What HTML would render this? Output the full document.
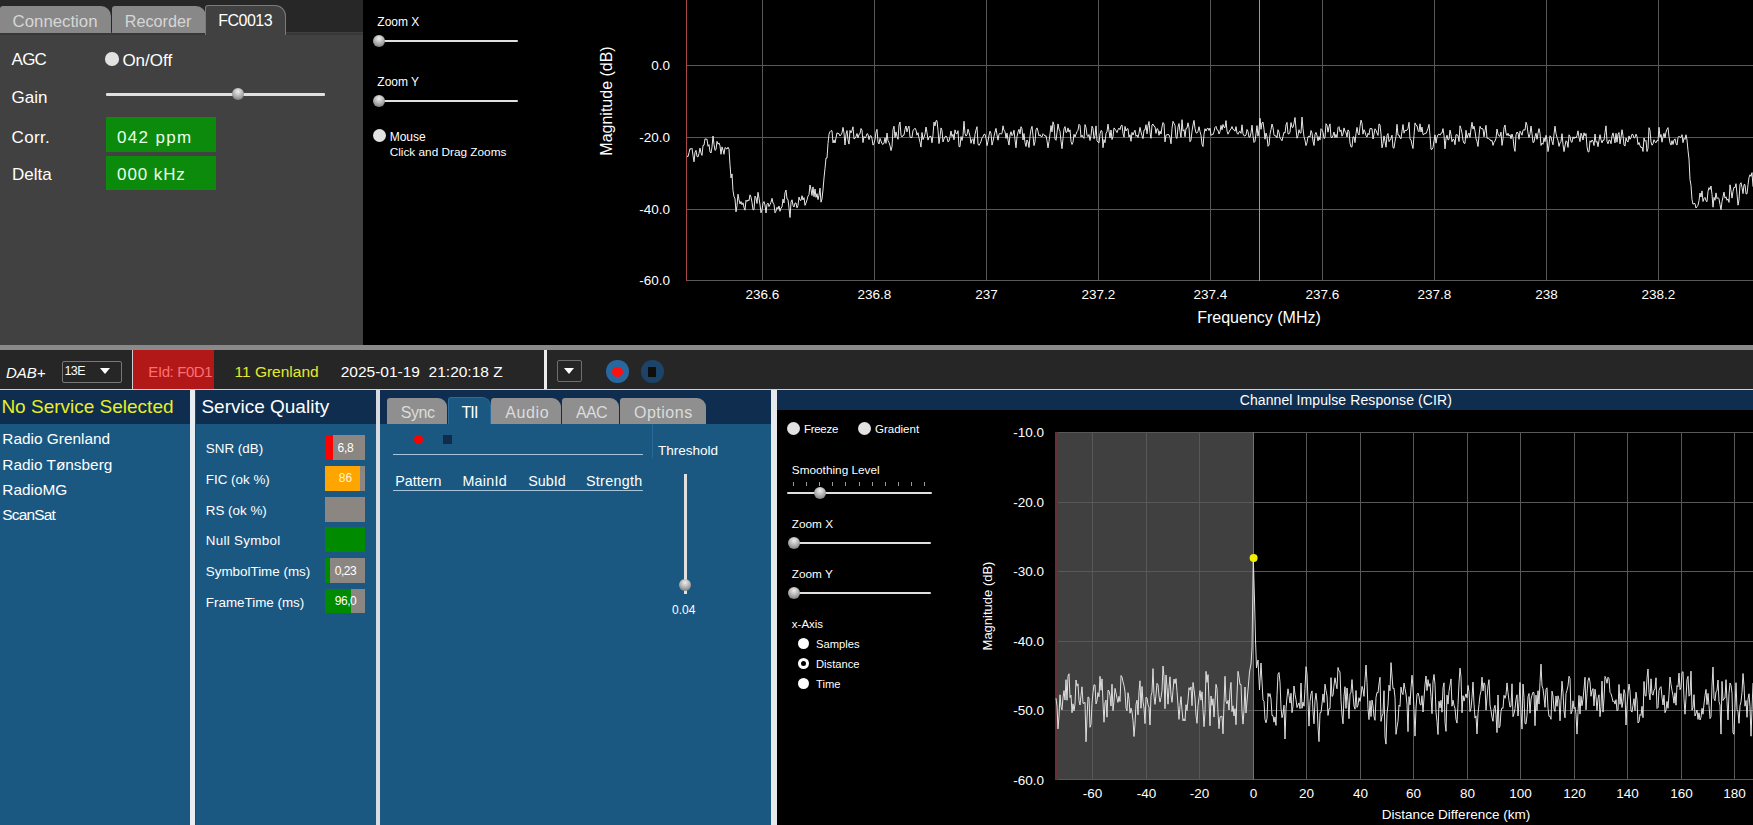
<!DOCTYPE html>
<html><head><meta charset="utf-8">
<style>
*{margin:0;padding:0;box-sizing:border-box}
html,body{width:1753px;height:825px;overflow:hidden;background:#000}
body{position:relative;font-family:"Liberation Sans",sans-serif;color:#fff}
.a{position:absolute;white-space:nowrap}
.t{position:absolute;white-space:nowrap;line-height:1}
.thumb{position:absolute;border-radius:50%;background:radial-gradient(circle at 50% 30%,#eeeeee 0%,#b4b4b4 45%,#666 100%)}
.track{position:absolute;background:#e0e0e0;height:2px;border-radius:1px;margin-top:0.5px}
.radio{position:absolute;border-radius:50%;background:#e2e2e2}
</style></head><body>

<!-- ===== top-left panel ===== -->
<div class="a" style="left:0;top:0;width:363px;height:345px;background:#414141"></div>
<div class="a" style="left:0;top:0;width:363px;height:32px;background:#272727"></div>
<div class="a" style="left:0;top:33px;width:363px;height:2px;background:#373737"></div>
<div class="a" style="left:0;top:5.5px;width:110.5px;height:27.5px;background:#888;border-radius:3px 10px 0 0"></div>
<div class="a" style="left:111.5px;top:5.5px;width:94px;height:27.5px;background:#888;border-radius:3px 10px 0 0"></div>
<div class="a" style="left:205px;top:5px;width:81px;height:30px;background:#414141;border:1px solid #7a7a7a;border-bottom:none;border-radius:3px 11px 0 0"></div>
<div class="t" style="left:12.6px;top:13.5px;font-size:16.8px;color:#d6d6d6">Connection</div>
<div class="t" style="left:124.8px;top:12.5px;font-size:16.2px;color:#d6d6d6">Recorder</div>
<div class="t" style="left:218.2px;top:13.2px;font-size:16px;color:#fff;letter-spacing:-0.5px">FC0013</div>

<div class="t" style="left:11.6px;top:50.8px;font-size:17px;color:#fff;letter-spacing:-0.8px">AGC</div>
<div class="t" style="left:11.6px;top:89.2px;font-size:17px;color:#fff">Gain</div>
<div class="t" style="left:11.6px;top:128.9px;font-size:17px;color:#fff;letter-spacing:0.3px">Corr.</div>
<div class="t" style="left:12.1px;top:166.2px;font-size:17px;color:#fff">Delta</div>
<div class="radio" style="left:105.2px;top:52px;width:13.6px;height:13.6px"></div>
<div class="t" style="left:122.4px;top:52.1px;font-size:17px;color:#fff">On/Off</div>
<div class="track" style="left:106px;top:93px;width:219px;height:3px;margin:0"></div>
<div class="thumb" style="left:232px;top:88px;width:12px;height:12px"></div>
<div class="a" style="left:106px;top:117px;width:110px;height:35px;background:#0b8a0b"></div>
<div class="a" style="left:106px;top:156px;width:110px;height:34px;background:#0b8a0b"></div>
<div class="t" style="left:117.1px;top:128.6px;font-size:17px;color:#eaffea;letter-spacing:1.3px">042 ppm</div>
<div class="t" style="left:117.1px;top:166.2px;font-size:17px;color:#eaffea;letter-spacing:0.9px">000 kHz</div>

<!-- ===== zoom controls ===== -->
<div class="t" style="left:377.3px;top:16.0px;font-size:12px">Zoom X</div>
<div class="track" style="left:378px;top:40px;width:139.6px;margin:0"></div>
<div class="thumb" style="left:373px;top:35px;width:12px;height:12px"></div>
<div class="t" style="left:377.3px;top:76.0px;font-size:12px">Zoom Y</div>
<div class="track" style="left:378px;top:100px;width:139.6px;margin:0"></div>
<div class="thumb" style="left:373px;top:95px;width:12px;height:12px"></div>
<div class="radio" style="left:372.5px;top:129.2px;width:13px;height:13px"></div>
<div class="t" style="left:389.7px;top:130.5px;font-size:12px">Mouse</div>
<div class="t" style="left:389.7px;top:146.9px;font-size:11.8px">Click and Drag Zooms</div>

<!-- ===== spectrum plot ===== -->
<svg class="a" style="left:0;top:0" width="1753" height="345" viewBox="0 0 1753 345">
 <g stroke="#585858" stroke-width="1" shape-rendering="crispEdges">
  <line x1="687" y1="65.5" x2="1753" y2="65.5"/>
  <line x1="687" y1="137.5" x2="1753" y2="137.5"/>
  <line x1="687" y1="209.5" x2="1753" y2="209.5"/>
  <line x1="687" y1="280.5" x2="1753" y2="280.5"/>
  <line x1="762.5" y1="0" x2="762.5" y2="281"/>
  <line x1="874.5" y1="0" x2="874.5" y2="281"/>
  <line x1="986.5" y1="0" x2="986.5" y2="281"/>
  <line x1="1098.5" y1="0" x2="1098.5" y2="281"/>
  <line x1="1210.5" y1="0" x2="1210.5" y2="281"/>
  <line x1="1322.5" y1="0" x2="1322.5" y2="281"/>
  <line x1="1434.5" y1="0" x2="1434.5" y2="281"/>
  <line x1="1546.5" y1="0" x2="1546.5" y2="281"/>
  <line x1="1658.5" y1="0" x2="1658.5" y2="281"/>
 </g>
 <line x1="1259.5" y1="0" x2="1259.5" y2="281" stroke="#9aa83c" stroke-width="1" shape-rendering="crispEdges"/>
 <line x1="686.5" y1="0" x2="686.5" y2="281" stroke="#a84848" stroke-width="1" shape-rendering="crispEdges"/>
 <polyline fill="none" stroke="#e8e8e8" stroke-width="1" points="687,156.0 688,156.7 689,152.7 690,148.6 691,149.3 692,148.2 693,155.5 694,161.8 695,152.4 696,150.4 697,156.5 698,156.9 699,153.5 700,148.1 701,152.9 702,155.4 703,145.4 704,145.3 705,138.8 706,139.3 707,139.2 708,146.3 709,144.6 710,152.0 711,153.0 712,147.1 713,136.0 714,144.4 715,150.4 716,149.5 717,141.3 718,144.2 719,142.9 720,145.8 721,154.3 722,146.9 723,150.0 724,154.3 725,147.5 726,148.3 727,149.1 728,147.2 729,149.2 730,164.8 731,177.9 732,173.9 733,190.7 734,196.5 735,198.8 736,211.9 737,205.7 738,194.2 739,199.9 740,203.9 741,201.5 742,204.7 743,202.8 744,207.5 745,210.2 746,200.2 747,201.5 748,199.9 749,200.7 750,194.8 751,197.2 752,202.3 753,209.9 754,209.5 755,196.1 756,197.8 757,203.5 758,192.3 759,198.2 760,204.8 761,212.8 762,210.0 763,203.1 764,201.6 765,205.0 766,213.0 767,204.3 768,203.1 769,206.6 770,204.7 771,202.2 772,198.3 773,203.0 774,204.5 775,212.8 776,211.1 777,207.3 778,209.0 779,206.0 780,211.3 781,207.9 782,207.0 783,199.1 784,203.0 785,192.7 786,190.1 787,199.0 788,199.5 789,208.1 790,217.5 791,202.2 792,199.8 793,205.3 794,207.0 795,203.1 796,203.0 797,207.8 798,205.4 799,197.0 800,200.2 801,200.4 802,195.7 803,200.0 804,197.6 805,205.4 806,203.0 807,199.9 808,196.0 809,194.7 810,185.0 811,189.3 812,195.5 813,186.9 814,196.7 815,189.0 816,197.4 817,193.6 818,199.6 819,195.3 820,188.1 821,202.2 822,198.9 823,189.9 824,177.9 825,168.3 826,158.1 827,158.1 828,143.5 829,134.2 830,131.7 831,130.6 832,130.8 833,142.9 834,139.9 835,143.0 836,137.9 837,132.8 838,133.6 839,133.6 840,136.0 841,134.7 842,132.9 843,127.4 844,132.9 845,145.0 846,134.2 847,130.5 848,139.9 849,144.1 850,130.4 851,132.9 852,130.5 853,126.8 854,139.0 855,138.3 856,136.5 857,133.5 858,138.0 859,134.4 860,133.8 861,128.5 862,130.2 863,142.6 864,136.5 865,138.0 866,136.7 867,133.6 868,134.3 869,139.6 870,136.0 871,135.7 872,138.7 873,145.1 874,143.4 875,139.5 876,132.1 877,129.3 878,142.0 879,144.0 880,138.4 881,141.1 882,143.7 883,144.5 884,143.0 885,137.8 886,143.4 887,133.0 888,140.9 889,142.4 890,145.6 891,150.6 892,146.8 893,129.6 894,126.2 895,137.6 896,131.9 897,136.4 898,139.3 899,125.0 900,122.0 901,135.2 902,137.0 903,135.3 904,135.2 905,129.3 906,126.0 907,131.9 908,128.1 909,126.1 910,137.1 911,137.6 912,137.5 913,130.3 914,129.6 915,128.2 916,130.0 917,135.2 918,132.7 919,138.0 920,142.1 921,147.1 922,132.5 923,139.6 924,137.2 925,134.1 926,127.0 927,132.6 928,140.1 929,137.1 930,136.3 931,136.5 932,142.8 933,134.7 934,122.1 935,125.9 936,120.7 937,120.7 938,130.2 939,143.6 940,136.8 941,127.9 942,130.5 943,141.9 944,138.9 945,136.7 946,136.0 947,137.6 948,141.9 949,141.0 950,136.7 951,131.0 952,136.6 953,134.4 954,139.8 955,129.9 956,133.4 957,133.9 958,130.7 959,146.6 960,146.7 961,136.6 962,140.5 963,135.5 964,121.3 965,133.5 966,136.1 967,134.8 968,129.2 969,132.5 970,136.3 971,143.3 972,139.7 973,138.7 974,144.2 975,134.3 976,130.0 977,126.7 978,144.0 979,145.4 980,143.8 981,141.4 982,137.8 983,136.9 984,134.3 985,134.3 986,138.1 987,145.7 988,141.3 989,135.3 990,131.2 991,133.4 992,145.1 993,141.2 994,136.3 995,132.0 996,128.4 997,134.9 998,140.2 999,134.2 1000,133.3 1001,134.1 1002,133.5 1003,125.8 1004,130.5 1005,131.4 1006,138.4 1007,133.1 1008,140.1 1009,145.1 1010,135.0 1011,131.7 1012,135.7 1013,134.3 1014,130.2 1015,139.7 1016,147.8 1017,136.6 1018,132.2 1019,129.3 1020,133.9 1021,126.7 1022,128.8 1023,140.0 1024,133.5 1025,142.7 1026,146.5 1027,140.0 1028,141.9 1029,147.5 1030,136.1 1031,129.4 1032,126.3 1033,135.7 1034,145.6 1035,141.8 1036,129.7 1037,127.9 1038,131.3 1039,135.9 1040,134.7 1041,136.6 1042,136.8 1043,133.7 1044,134.7 1045,136.2 1046,135.7 1047,140.8 1048,147.9 1049,141.5 1050,133.7 1051,125.6 1052,131.9 1053,121.8 1054,124.9 1055,139.1 1056,140.3 1057,132.6 1058,123.9 1059,129.1 1060,131.3 1061,141.1 1062,148.7 1063,138.4 1064,128.8 1065,126.6 1066,132.5 1067,132.0 1068,127.9 1069,132.1 1070,129.8 1071,141.4 1072,144.5 1073,142.2 1074,134.3 1075,137.0 1076,134.2 1077,131.7 1078,130.2 1079,124.3 1080,125.3 1081,137.0 1082,135.1 1083,137.2 1084,138.4 1085,124.6 1086,127.6 1087,135.1 1088,136.7 1089,134.5 1090,140.5 1091,135.6 1092,126.2 1093,128.4 1094,138.7 1095,135.7 1096,125.9 1097,140.7 1098,142.1 1099,142.9 1100,133.8 1101,130.5 1102,131.1 1103,147.7 1104,139.6 1105,142.7 1106,133.2 1107,131.9 1108,124.1 1109,131.1 1110,137.9 1111,130.0 1112,139.5 1113,136.5 1114,127.9 1115,129.1 1116,130.8 1117,132.6 1118,129.8 1119,128.1 1120,129.7 1121,125.8 1122,125.0 1123,133.4 1124,137.2 1125,126.4 1126,131.0 1127,128.9 1128,128.7 1129,137.1 1130,134.7 1131,141.3 1132,132.4 1133,135.0 1134,132.3 1135,130.2 1136,136.3 1137,135.0 1138,137.5 1139,133.2 1140,127.4 1141,132.0 1142,135.7 1143,138.6 1144,130.1 1145,129.9 1146,124.7 1147,133.8 1148,125.9 1149,121.5 1150,132.7 1151,138.3 1152,124.9 1153,124.1 1154,126.2 1155,126.7 1156,133.4 1157,128.6 1158,129.3 1159,135.3 1160,131.0 1161,134.0 1162,127.0 1163,122.5 1164,123.9 1165,141.9 1166,135.2 1167,134.9 1168,134.3 1169,134.9 1170,137.3 1171,143.8 1172,128.2 1173,121.4 1174,123.4 1175,125.4 1176,137.5 1177,138.4 1178,127.2 1179,123.5 1180,131.7 1181,137.4 1182,119.7 1183,131.1 1184,129.7 1185,136.8 1186,128.4 1187,128.2 1188,122.8 1189,127.7 1190,141.8 1191,140.1 1192,131.2 1193,125.0 1194,120.4 1195,128.4 1196,132.8 1197,133.0 1198,131.3 1199,126.7 1200,131.5 1201,135.2 1202,144.1 1203,146.5 1204,134.4 1205,128.7 1206,131.1 1207,128.7 1208,128.1 1209,130.5 1210,128.1 1211,135.5 1212,134.2 1213,134.6 1214,131.7 1215,127.4 1216,126.4 1217,129.8 1218,130.2 1219,134.0 1220,131.7 1221,125.4 1222,129.8 1223,124.5 1224,127.3 1225,127.6 1226,120.6 1227,131.1 1228,134.2 1229,132.0 1230,130.0 1231,129.0 1232,126.5 1233,129.4 1234,129.8 1235,131.2 1236,126.6 1237,133.1 1238,134.3 1239,132.0 1240,131.3 1241,133.4 1242,124.8 1243,133.9 1244,135.8 1245,135.9 1246,135.0 1247,129.5 1248,131.6 1249,137.3 1250,137.0 1251,132.8 1252,125.2 1253,135.9 1254,142.5 1255,141.3 1256,133.7 1257,125.6 1258,136.2 1259,129.8 1260,118.3 1261,129.3 1262,122.8 1263,122.1 1264,129.2 1265,139.2 1266,133.1 1267,136.7 1268,146.3 1269,145.1 1270,134.4 1271,129.5 1272,124.0 1273,127.6 1274,135.1 1275,136.2 1276,135.7 1277,137.9 1278,129.7 1279,132.5 1280,138.1 1281,139.1 1282,140.8 1283,136.4 1284,132.2 1285,133.1 1286,125.0 1287,122.4 1288,133.8 1289,133.9 1290,132.1 1291,122.6 1292,127.2 1293,127.4 1294,123.3 1295,117.5 1296,128.7 1297,138.2 1298,135.5 1299,129.7 1300,132.9 1301,133.1 1302,117.1 1303,128.7 1304,136.8 1305,140.2 1306,145.6 1307,142.5 1308,136.7 1309,136.1 1310,137.0 1311,130.5 1312,133.0 1313,141.0 1314,145.5 1315,134.5 1316,132.4 1317,135.7 1318,140.9 1319,136.6 1320,139.9 1321,128.7 1322,129.7 1323,132.3 1324,138.5 1325,137.7 1326,123.7 1327,125.3 1328,132.2 1329,126.8 1330,123.9 1331,137.2 1332,137.8 1333,135.6 1334,132.0 1335,137.7 1336,134.4 1337,137.6 1338,127.6 1339,126.6 1340,131.7 1341,129.9 1342,136.2 1343,134.1 1344,127.9 1345,131.5 1346,132.3 1347,137.0 1348,129.9 1349,131.3 1350,143.1 1351,146.9 1352,146.9 1353,136.9 1354,136.9 1355,142.6 1356,133.4 1357,127.4 1358,133.2 1359,135.0 1360,126.6 1361,120.1 1362,123.3 1363,134.2 1364,129.7 1365,131.9 1366,135.6 1367,137.1 1368,133.3 1369,134.8 1370,128.5 1371,128.7 1372,128.7 1373,139.0 1374,134.2 1375,128.8 1376,130.3 1377,133.1 1378,135.4 1379,123.9 1380,124.8 1381,134.0 1382,147.8 1383,143.4 1384,135.9 1385,141.3 1386,147.2 1387,135.3 1388,133.5 1389,141.7 1390,140.1 1391,138.3 1392,135.2 1393,147.7 1394,148.2 1395,141.4 1396,136.4 1397,124.3 1398,135.0 1399,135.0 1400,137.9 1401,138.8 1402,131.1 1403,124.5 1404,133.2 1405,130.3 1406,130.7 1407,130.1 1408,128.4 1409,122.3 1410,139.1 1411,139.9 1412,144.9 1413,148.5 1414,135.4 1415,122.9 1416,125.2 1417,125.7 1418,130.4 1419,131.8 1420,123.8 1421,132.0 1422,127.1 1423,134.6 1424,134.6 1425,133.1 1426,133.6 1427,131.1 1428,128.4 1429,124.4 1430,135.5 1431,149.3 1432,149.3 1433,147.5 1434,140.8 1435,134.8 1436,143.2 1437,137.4 1438,134.7 1439,134.0 1440,135.2 1441,133.2 1442,133.0 1443,128.6 1444,135.4 1445,148.9 1446,138.6 1447,135.2 1448,139.9 1449,139.4 1450,130.1 1451,134.5 1452,141.7 1453,139.3 1454,139.6 1455,144.7 1456,134.6 1457,134.9 1458,135.5 1459,141.5 1460,125.8 1461,128.6 1462,133.2 1463,140.5 1464,143.2 1465,143.4 1466,130.3 1467,138.2 1468,134.9 1469,133.0 1470,137.5 1471,128.8 1472,122.3 1473,129.1 1474,126.2 1475,131.2 1476,138.5 1477,141.6 1478,146.5 1479,135.8 1480,126.3 1481,128.7 1482,128.5 1483,129.0 1484,136.8 1485,130.9 1486,125.3 1487,138.2 1488,138.1 1489,139.3 1490,139.3 1491,141.2 1492,140.3 1493,145.4 1494,142.3 1495,141.0 1496,138.2 1497,129.0 1498,133.9 1499,136.0 1500,136.3 1501,132.1 1502,145.4 1503,138.8 1504,127.8 1505,125.0 1506,133.1 1507,135.5 1508,133.2 1509,136.1 1510,134.7 1511,138.8 1512,134.0 1513,137.7 1514,147.2 1515,151.4 1516,134.7 1517,132.0 1518,133.0 1519,139.3 1520,131.2 1521,132.9 1522,135.2 1523,130.3 1524,129.7 1525,130.2 1526,122.2 1527,125.2 1528,133.2 1529,137.6 1530,134.1 1531,126.0 1532,133.4 1533,142.6 1534,142.1 1535,136.7 1536,133.2 1537,139.3 1538,133.4 1539,128.6 1540,133.3 1541,145.5 1542,143.0 1543,144.3 1544,138.0 1545,141.7 1546,135.3 1547,139.6 1548,151.6 1549,145.3 1550,135.8 1551,137.0 1552,141.4 1553,144.8 1554,134.1 1555,126.2 1556,133.5 1557,137.6 1558,140.5 1559,146.4 1560,142.9 1561,141.5 1562,133.7 1563,144.5 1564,151.6 1565,146.0 1566,140.8 1567,141.8 1568,147.4 1569,134.8 1570,136.5 1571,141.6 1572,142.4 1573,136.8 1574,138.7 1575,136.9 1576,138.0 1577,135.6 1578,130.8 1579,137.4 1580,141.7 1581,133.1 1582,136.0 1583,140.0 1584,132.8 1585,135.9 1586,133.6 1587,146.7 1588,151.8 1589,151.8 1590,140.8 1591,142.3 1592,140.0 1593,141.1 1594,145.5 1595,134.0 1596,142.3 1597,141.4 1598,146.7 1599,140.3 1600,134.7 1601,139.8 1602,142.9 1603,140.1 1604,140.3 1605,132.5 1606,125.8 1607,141.3 1608,143.8 1609,140.1 1610,140.3 1611,143.7 1612,135.9 1613,132.9 1614,137.7 1615,142.9 1616,133.4 1617,142.2 1618,134.4 1619,132.5 1620,143.9 1621,137.5 1622,129.7 1623,135.5 1624,145.0 1625,146.1 1626,138.0 1627,141.0 1628,142.1 1629,135.9 1630,139.3 1631,137.7 1632,134.2 1633,134.6 1634,137.9 1635,137.7 1636,134.2 1637,136.5 1638,144.6 1639,142.5 1640,145.7 1641,147.7 1642,147.0 1643,151.5 1644,137.9 1645,141.4 1646,140.4 1647,151.5 1648,148.3 1649,127.7 1650,130.6 1651,142.0 1652,145.2 1653,143.8 1654,139.7 1655,141.9 1656,142.8 1657,140.4 1658,141.0 1659,127.3 1660,137.2 1661,134.5 1662,142.2 1663,137.1 1664,133.3 1665,137.9 1666,132.1 1667,129.2 1668,127.6 1669,136.6 1670,142.9 1671,145.1 1672,140.7 1673,144.5 1674,140.0 1675,138.8 1676,143.3 1677,145.1 1678,137.6 1679,136.2 1680,137.3 1681,137.4 1682,134.7 1683,142.7 1684,138.3 1685,139.4 1686,134.8 1687,140.0 1688,150.5 1689,159.0 1690,179.7 1691,185.3 1692,199.7 1693,204.2 1694,203.4 1695,203.6 1696,208.0 1697,206.7 1698,205.2 1699,200.6 1700,193.0 1701,197.0 1702,190.9 1703,201.5 1704,198.6 1705,197.4 1706,200.8 1707,201.7 1708,191.4 1709,187.6 1710,189.5 1711,186.0 1712,194.5 1713,207.2 1714,197.4 1715,200.3 1716,192.9 1717,198.7 1718,197.6 1719,198.8 1720,204.5 1721,209.8 1722,201.7 1723,196.9 1724,192.1 1725,198.2 1726,196.8 1727,200.3 1728,198.9 1729,202.4 1730,184.8 1731,190.7 1732,198.1 1733,191.4 1734,187.3 1735,187.7 1736,183.7 1737,194.1 1738,205.2 1739,199.9 1740,184.4 1741,182.7 1742,187.6 1743,193.6 1744,184.6 1745,184.6 1746,193.8 1747,193.8 1748,184.8 1749,177.5 1750,174.7 1751,176.4 1752,172.6 1753,186.7"/>
 <g font-family="Liberation Sans" font-size="13.5" fill="#fff" text-anchor="end">
  <text x="670" y="70">0.0</text>
  <text x="670" y="142">-20.0</text>
  <text x="670" y="214">-40.0</text>
  <text x="670" y="285">-60.0</text>
 </g>
 <g font-family="Liberation Sans" font-size="13.5" fill="#fff" text-anchor="middle">
  <text x="762.5" y="299">236.6</text>
  <text x="874.5" y="299">236.8</text>
  <text x="986.5" y="299">237</text>
  <text x="1098.5" y="299">237.2</text>
  <text x="1210.5" y="299">237.4</text>
  <text x="1322.5" y="299">237.6</text>
  <text x="1434.5" y="299">237.8</text>
  <text x="1546.5" y="299">238</text>
  <text x="1658.5" y="299">238.2</text>
  <text x="1259" y="323" font-size="16">Frequency (MHz)</text>
  <text x="0" y="0" font-size="16" transform="translate(612,101) rotate(-90)">Magnitude (dB)</text>
 </g>
</svg>

<!-- ===== separator + toolbar ===== -->
<div class="a" style="left:0;top:345px;width:1753px;height:5px;background:#8a8a8a"></div>
<div class="a" style="left:0;top:350px;width:1753px;height:39px;background:#262626"></div>
<div class="t" style="left:6px;top:364.8px;font-size:15px;font-style:italic">DAB+</div>
<div class="a" style="left:62px;top:361px;width:60px;height:22px;border:1px solid #777;border-radius:2px"></div>
<div class="t" style="left:64.5px;top:365.4px;font-size:12.5px;letter-spacing:-0.6px">13E</div>
<div class="a" style="left:100px;top:368px;width:0;height:0;border-left:5px solid transparent;border-right:5px solid transparent;border-top:6px solid #fff"></div>
<div class="a" style="left:132px;top:350px;width:1px;height:39px;background:#cfcfcf"></div>
<div class="a" style="left:133px;top:350px;width:81px;height:39px;background:#b31818"></div>
<div class="t" style="left:148.3px;top:363.6px;font-size:15px;color:#ff7070;letter-spacing:-0.4px">EId: F0D1</div>
<div class="t" style="left:234.5px;top:363.6px;font-size:15.5px;color:#e4ea30">11 Grenland</div>
<div class="t" style="left:340.7px;top:363.6px;font-size:15.5px;color:#fff">2025-01-19&nbsp; 21:20:18 Z</div>
<div class="a" style="left:544px;top:350px;width:3px;height:39px;background:#ececec"></div>
<div class="a" style="left:557px;top:360px;width:25px;height:22px;border:1px solid #6e6e6e;border-radius:2px"></div>
<div class="a" style="left:564px;top:368px;width:0;height:0;border-left:5.5px solid transparent;border-right:5.5px solid transparent;border-top:6px solid #fff"></div>
<div class="a" style="left:606px;top:360px;width:22.5px;height:22.5px;border-radius:50%;background:#2868a0"></div>
<div class="a" style="left:612px;top:366.5px;width:10.5px;height:10.5px;border-radius:50%;background:#ff1010"></div>
<div class="a" style="left:641px;top:360px;width:22.5px;height:22.5px;border-radius:50%;background:#1c4468"></div>
<div class="a" style="left:648px;top:367px;width:8px;height:10px;background:#100e0c"></div>

<!-- ===== bottom panels ===== -->
<div class="a" style="left:0;top:389px;width:1753px;height:1px;background:#c8d2dc"></div>
<!-- panel 1 -->
<div class="a" style="left:0;top:390px;width:190px;height:435px;background:#1a5882"></div>
<div class="a" style="left:0;top:390px;width:190px;height:34px;background:#0f2d4e"></div>
<div class="t" style="left:1.4px;top:397.4px;font-size:19px;color:#e8ef24">No Service Selected</div>
<div class="t" style="left:2.3px;top:431.1px;font-size:15.4px">Radio Grenland</div>
<div class="t" style="left:2.3px;top:456.6px;font-size:15.4px">Radio Tønsberg</div>
<div class="t" style="left:2.3px;top:481.8px;font-size:15.4px">RadioMG</div>
<div class="t" style="left:2.3px;top:507.2px;font-size:15.4px;letter-spacing:-0.8px">ScanSat</div>
<div class="a" style="left:190px;top:390px;width:5px;height:435px;background:#e6edf3"></div>
<div class="a" style="left:195px;top:390px;width:1px;height:435px;background:#1f4a6e"></div>
<!-- panel 2 -->
<div class="a" style="left:196px;top:390px;width:180px;height:435px;background:#1a5882"></div>
<div class="a" style="left:196px;top:390px;width:180px;height:34px;background:#0f2d4e"></div>
<div class="t" style="left:201.4px;top:397.4px;font-size:19px">Service Quality</div>
<div class="t" style="left:205.8px;top:441.7px;font-size:13.4px">SNR (dB)</div>
<div class="t" style="left:205.8px;top:472.8px;font-size:13.4px">FIC (ok %)</div>
<div class="t" style="left:205.8px;top:503.9px;font-size:13.4px">RS (ok %)</div>
<div class="t" style="left:205.8px;top:533.9px;font-size:13.4px;letter-spacing:0.3px">Null Symbol</div>
<div class="t" style="left:205.8px;top:565.0px;font-size:13.4px">SymbolTime (ms)</div>
<div class="t" style="left:205.8px;top:595.6px;font-size:13.4px">FrameTime (ms)</div>
<div class="a" style="left:325px;top:435px;width:40px;height:25px;background:#8b8682"></div>
<div class="a" style="left:325px;top:435px;width:8px;height:25px;background:#ff0000"></div>
<div class="a" style="left:325px;top:466px;width:40px;height:25px;background:#8b8682"></div>
<div class="a" style="left:325px;top:466px;width:35px;height:25px;background:#ffa500"></div>
<div class="a" style="left:325px;top:497px;width:40px;height:25px;background:#8b8682"></div>
<div class="a" style="left:325px;top:527px;width:40px;height:25px;background:#008a00"></div>
<div class="a" style="left:325px;top:558px;width:40px;height:25px;background:#8b8682"></div>
<div class="a" style="left:325px;top:558px;width:5px;height:25px;background:#008a00"></div>
<div class="a" style="left:325px;top:589px;width:40px;height:24px;background:#8b8682"></div>
<div class="a" style="left:325px;top:589px;width:26px;height:24px;background:#008a00"></div>
<div class="t" style="left:325.5px;top:441.7px;width:40px;text-align:center;font-size:12px;letter-spacing:-0.3px">6,8</div>
<div class="t" style="left:325.5px;top:472.3px;width:40px;text-align:center;font-size:12px;color:#fff5d0">86</div>
<div class="t" style="left:325.5px;top:565.0px;width:40px;text-align:center;font-size:12px;letter-spacing:-0.5px">0,23</div>
<div class="t" style="left:325.5px;top:595.4px;width:40px;text-align:center;font-size:12px;letter-spacing:-0.5px">96,0</div>
<div class="a" style="left:376px;top:390px;width:4px;height:435px;background:#d8dce2"></div>
<!-- panel 3 (TII) -->
<div class="a" style="left:380px;top:390px;width:391px;height:435px;background:#1a5882"></div>
<div class="a" style="left:380px;top:390px;width:391px;height:34px;background:#0f2d4e"></div>
<div class="a" style="left:387px;top:398px;width:60px;height:26px;background:#8f8f8f;border-radius:3px 9px 0 0"></div>
<div class="a" style="left:448px;top:397px;width:43px;height:27px;background:#1a5882;border:1px solid #2c6c9c;border-bottom:none;border-radius:3px 9px 0 0"></div>
<div class="a" style="left:491px;top:398px;width:70px;height:26px;background:#8f8f8f;border-radius:3px 9px 0 0"></div>
<div class="a" style="left:562px;top:398px;width:57px;height:26px;background:#8f8f8f;border-radius:3px 9px 0 0"></div>
<div class="a" style="left:620px;top:398px;width:86px;height:26px;background:#8f8f8f;border-radius:3px 9px 0 0"></div>
<div class="t" style="left:400.7px;top:404.8px;font-size:16px;color:#dcdcdc;letter-spacing:-0.4px">Sync</div>
<div class="t" style="left:461.5px;top:404.8px;font-size:16px;color:#fff;letter-spacing:-0.9px">TII</div>
<div class="t" style="left:505.3px;top:404.8px;font-size:16px;color:#dcdcdc;letter-spacing:0.6px">Audio</div>
<div class="t" style="left:576px;top:404.8px;font-size:16px;color:#dcdcdc;letter-spacing:-0.7px">AAC</div>
<div class="t" style="left:634px;top:404.8px;font-size:16px;color:#dcdcdc;letter-spacing:0.5px">Options</div>
<div class="a" style="left:414px;top:435px;width:9px;height:9px;border-radius:50%;background:#ff0000"></div>
<div class="a" style="left:443px;top:435px;width:9px;height:9px;background:#0f2d4a"></div>
<div class="a" style="left:393px;top:454px;width:250px;height:1px;background:#a8c4dc"></div>
<div class="a" style="left:652px;top:424px;width:1px;height:34px;background:#2a6898"></div>
<div class="t" style="left:395.3px;top:473.6px;font-size:14.3px">Pattern</div>
<div class="t" style="left:462.4px;top:473.6px;font-size:14.3px;letter-spacing:0.3px">MainId</div>
<div class="t" style="left:528.3px;top:473.6px;font-size:14.3px">SubId</div>
<div class="t" style="left:586px;top:473.6px;font-size:14.3px;letter-spacing:0.3px">Strength</div>
<div class="a" style="left:393px;top:490px;width:250px;height:1px;background:#a8c4dc"></div>
<div class="t" style="left:658px;top:444.2px;font-size:13.5px">Threshold</div>
<div class="a" style="left:684px;top:474.4px;width:2.5px;height:120px;background:#e0e0e0"></div>
<div class="thumb" style="left:679.4px;top:579.4px;width:12px;height:12px"></div>
<div class="t" style="left:672px;top:604.4px;font-size:12px">0.04</div>
<div class="a" style="left:771px;top:390px;width:6px;height:435px;background:#e6e8ec"></div>
<!-- panel 4 (CIR) -->
<div class="a" style="left:777px;top:390px;width:976px;height:20px;background:#0f2d4e"></div>
<div class="t" style="left:1239.7px;top:392.8px;font-size:14px;letter-spacing:0.1px">Channel Impulse Response (CIR)</div>
<div class="radio" style="left:786.5px;top:422px;width:13px;height:13px"></div>
<div class="t" style="left:804px;top:424.1px;font-size:11.5px;letter-spacing:-0.3px">Freeze</div>
<div class="radio" style="left:858px;top:422px;width:13px;height:13px"></div>
<div class="t" style="left:875px;top:424.1px;font-size:11.5px">Gradient</div>
<div class="t" style="left:791.8px;top:464.9px;font-size:11.8px">Smoothing Level</div>
<svg class="a" style="left:0;top:0" width="1753" height="825">
 <g stroke="#9a9a9a" stroke-width="1" shape-rendering="crispEdges">
  <line x1="793.5" y1="482" x2="793.5" y2="486"/><line x1="806.5" y1="482" x2="806.5" y2="486"/>
  <line x1="819.5" y1="482" x2="819.5" y2="486"/><line x1="832.5" y1="482" x2="832.5" y2="486"/>
  <line x1="845.5" y1="482" x2="845.5" y2="486"/><line x1="859.5" y1="482" x2="859.5" y2="486"/>
  <line x1="872.5" y1="482" x2="872.5" y2="486"/><line x1="885.5" y1="482" x2="885.5" y2="486"/>
  <line x1="898.5" y1="482" x2="898.5" y2="486"/><line x1="911.5" y1="482" x2="911.5" y2="486"/>
  <line x1="924.5" y1="482" x2="924.5" y2="486"/>
 </g>
</svg>
<div class="track" style="left:786.5px;top:492px;width:145px;margin:0"></div>
<div class="thumb" style="left:813.5px;top:486.7px;width:12px;height:12px"></div>
<div class="t" style="left:791.8px;top:518.6px;font-size:11.8px">Zoom X</div>
<div class="track" style="left:793px;top:542px;width:138.2px;margin:0"></div>
<div class="thumb" style="left:787.5px;top:537.2px;width:12px;height:12px"></div>
<div class="t" style="left:791.8px;top:568.7px;font-size:11.8px">Zoom Y</div>
<div class="track" style="left:793px;top:592px;width:138.2px;margin:0"></div>
<div class="thumb" style="left:787.5px;top:586.6px;width:12px;height:12px"></div>
<div class="t" style="left:791.8px;top:619.3px;font-size:11.5px">x-Axis</div>
<div class="radio" style="left:798px;top:638px;width:11px;height:11px;background:#fff"></div>
<div class="t" style="left:816px;top:639.4px;font-size:11.2px">Samples</div>
<div class="radio" style="left:798px;top:657.7px;width:11px;height:11px;background:#fff"></div>
<div class="radio" style="left:801px;top:660.7px;width:5px;height:5px;background:#000"></div>
<div class="t" style="left:816px;top:659.1px;font-size:11.2px">Distance</div>
<div class="radio" style="left:798px;top:677.5px;width:11px;height:11px;background:#fff"></div>
<div class="t" style="left:816px;top:678.9px;font-size:11.2px">Time</div>

<svg class="a" style="left:0;top:0" width="1753" height="825" viewBox="0 0 1753 825">
 <rect x="1056" y="432" width="197" height="347" fill="#404040"/>
 <g stroke="#585858" stroke-width="1" shape-rendering="crispEdges">
  <line x1="1056" y1="432.5" x2="1753" y2="432.5"/>
  <line x1="1056" y1="502.5" x2="1753" y2="502.5"/>
  <line x1="1056" y1="571.5" x2="1753" y2="571.5"/>
  <line x1="1056" y1="641.5" x2="1753" y2="641.5"/>
  <line x1="1056" y1="710.5" x2="1753" y2="710.5"/>
  <line x1="1056" y1="779.5" x2="1753" y2="779.5"/>
  <line x1="1092.5" y1="432" x2="1092.5" y2="780"/>
  <line x1="1146.5" y1="432" x2="1146.5" y2="780"/>
  <line x1="1199.5" y1="432" x2="1199.5" y2="780"/>
  <line x1="1306.5" y1="432" x2="1306.5" y2="780"/>
  <line x1="1360.5" y1="432" x2="1360.5" y2="780"/>
  <line x1="1413.5" y1="432" x2="1413.5" y2="780"/>
  <line x1="1467.5" y1="432" x2="1467.5" y2="780"/>
  <line x1="1520.5" y1="432" x2="1520.5" y2="780"/>
  <line x1="1574.5" y1="432" x2="1574.5" y2="780"/>
  <line x1="1627.5" y1="432" x2="1627.5" y2="780"/>
  <line x1="1681.5" y1="432" x2="1681.5" y2="780"/>
  <line x1="1734.5" y1="432" x2="1734.5" y2="780"/>
 </g>
 <line x1="1253.5" y1="432" x2="1253.5" y2="780" stroke="#7a7a3a" stroke-width="1" shape-rendering="crispEdges"/>
 <rect x="1055" y="432" width="3" height="348" fill="#6a3038"/>
 <polyline fill="none" stroke="#e0e0e0" stroke-width="1" points="1056.0,698.2 1057.0,706.1 1058.0,728.9 1059.0,716.2 1060.0,694.8 1061.0,706.6 1062.0,709.9 1063.0,697.8 1064.0,690.6 1065.0,700.0 1066.0,679.7 1067.0,700.3 1068.0,676.1 1069.0,673.8 1070.0,697.6 1071.0,695.1 1072.0,712.7 1073.0,703.8 1074.0,710.9 1075.0,704.1 1076.0,680.0 1077.0,686.1 1078.0,683.8 1079.0,700.6 1080.0,705.0 1081.0,695.4 1082.0,686.8 1083.0,703.4 1084.0,703.2 1085.0,702.3 1086.0,741.8 1087.0,718.1 1088.0,696.9 1089.0,697.7 1090.0,727.3 1091.0,724.2 1092.0,703.8 1093.0,692.4 1094.0,684.8 1095.0,685.0 1096.0,703.9 1097.0,700.9 1098.0,692.6 1099.0,696.7 1100.0,676.3 1101.0,690.3 1102.0,678.9 1103.0,702.9 1104.0,722.2 1105.0,702.7 1106.0,700.1 1107.0,717.2 1108.0,690.2 1109.0,690.8 1110.0,695.5 1111.0,706.0 1112.0,684.2 1113.0,710.7 1114.0,701.2 1115.0,688.4 1116.0,693.1 1117.0,698.1 1118.0,702.4 1119.0,696.3 1120.0,701.5 1121.0,675.5 1122.0,677.0 1123.0,681.8 1124.0,685.6 1125.0,691.8 1126.0,708.2 1127.0,710.8 1128.0,692.7 1129.0,699.1 1130.0,713.2 1131.0,708.1 1132.0,712.0 1133.0,720.3 1134.0,736.5 1135.0,724.1 1136.0,704.4 1137.0,700.2 1138.0,714.8 1139.0,691.6 1140.0,680.8 1141.0,708.3 1142.0,686.5 1143.0,701.8 1144.0,708.0 1145.0,723.6 1146.0,697.2 1147.0,697.9 1148.0,704.5 1149.0,707.2 1150.0,725.0 1151.0,695.9 1152.0,692.2 1153.0,668.6 1154.0,696.3 1155.0,704.4 1156.0,694.9 1157.0,683.3 1158.0,684.8 1159.0,696.0 1160.0,702.1 1161.0,697.8 1162.0,690.8 1163.0,666.0 1164.0,676.5 1165.0,708.7 1166.0,675.0 1167.0,686.9 1168.0,704.2 1169.0,687.5 1170.0,676.8 1171.0,695.8 1172.0,702.3 1173.0,690.6 1174.0,679.1 1175.0,683.6 1176.0,678.7 1177.0,691.5 1178.0,705.2 1179.0,719.4 1180.0,705.5 1181.0,696.6 1182.0,710.4 1183.0,720.9 1184.0,718.8 1185.0,721.0 1186.0,704.7 1187.0,710.7 1188.0,699.9 1189.0,687.7 1190.0,690.1 1191.0,686.9 1192.0,705.7 1193.0,682.5 1194.0,689.3 1195.0,698.0 1196.0,715.4 1197.0,723.3 1198.0,705.7 1199.0,697.8 1200.0,690.5 1201.0,700.2 1202.0,691.8 1203.0,709.5 1204.0,726.7 1205.0,712.5 1206.0,671.4 1207.0,682.4 1208.0,674.6 1209.0,700.6 1210.0,725.8 1211.0,696.0 1212.0,705.4 1213.0,698.8 1214.0,717.1 1215.0,701.8 1216.0,684.3 1217.0,688.7 1218.0,712.9 1219.0,728.7 1220.0,716.9 1221.0,716.6 1222.0,716.1 1223.0,733.8 1224.0,703.6 1225.0,676.3 1226.0,701.2 1227.0,703.8 1228.0,700.4 1229.0,710.0 1230.0,690.8 1231.0,682.4 1232.0,711.6 1233.0,705.8 1234.0,715.9 1235.0,708.7 1236.0,724.7 1237.0,695.0 1238.0,671.3 1239.0,676.7 1240.0,684.6 1241.0,684.3 1242.0,711.8 1243.0,724.1 1244.0,710.6 1245.0,687.0 1246.0,713.0 1248.0,690.0 1249.5,672.0 1251.0,664.0 1252.0,648.0 1253.3,558.0 1254.5,600.0 1255.5,640.0 1256.5,668.0 1258.0,660.0 1259.5,690.0 1261.0,663.0 1263.0,700.0 1264.0,701.2 1265.0,719.4 1266.0,722.8 1267.0,718.3 1268.0,693.3 1269.0,696.6 1270.0,693.6 1271.0,699.0 1272.0,715.6 1273.0,715.5 1274.0,722.2 1275.0,716.9 1276.0,725.4 1277.0,695.8 1278.0,674.2 1279.0,672.5 1280.0,682.3 1281.0,707.9 1282.0,717.7 1283.0,714.0 1284.0,705.2 1285.0,739.0 1286.0,708.7 1287.0,697.2 1288.0,688.8 1289.0,695.4 1290.0,703.1 1291.0,693.2 1292.0,712.7 1293.0,706.1 1294.0,686.0 1295.0,694.2 1296.0,699.7 1297.0,707.5 1298.0,705.0 1299.0,702.9 1300.0,708.6 1301.0,683.0 1302.0,708.3 1303.0,702.2 1304.0,706.2 1305.0,688.6 1306.0,666.7 1307.0,673.8 1308.0,701.2 1309.0,726.1 1310.0,701.6 1311.0,693.8 1312.0,690.9 1313.0,711.6 1314.0,723.8 1315.0,700.4 1316.0,693.2 1317.0,702.7 1318.0,726.9 1319.0,741.6 1320.0,712.7 1321.0,712.5 1322.0,704.0 1323.0,693.9 1324.0,702.5 1325.0,684.2 1326.0,690.5 1327.0,695.9 1328.0,715.4 1329.0,708.8 1330.0,708.6 1331.0,677.6 1332.0,696.4 1333.0,695.6 1334.0,685.1 1335.0,677.8 1336.0,683.7 1337.0,688.8 1338.0,667.5 1339.0,670.9 1340.0,671.7 1341.0,700.5 1342.0,715.0 1343.0,723.8 1344.0,696.2 1345.0,686.7 1346.0,708.5 1347.0,688.0 1348.0,701.6 1349.0,718.7 1350.0,694.1 1351.0,692.2 1352.0,679.6 1353.0,694.3 1354.0,706.0 1355.0,709.2 1356.0,690.5 1357.0,707.4 1358.0,705.2 1359.0,697.7 1360.0,701.4 1361.0,696.1 1362.0,686.4 1363.0,689.4 1364.0,696.4 1365.0,680.0 1366.0,665.0 1367.0,682.4 1368.0,708.9 1369.0,719.6 1370.0,700.7 1371.0,716.6 1372.0,700.0 1373.0,705.9 1374.0,716.5 1375.0,720.3 1376.0,697.5 1377.0,692.4 1378.0,692.8 1379.0,683.9 1380.0,677.3 1381.0,721.4 1382.0,716.1 1383.0,713.6 1384.0,690.7 1385.0,737.2 1386.0,744.1 1387.0,713.4 1388.0,705.0 1389.0,685.2 1390.0,690.8 1391.0,662.6 1392.0,676.0 1393.0,688.6 1394.0,688.2 1395.0,697.6 1396.0,734.3 1397.0,727.1 1398.0,721.2 1399.0,705.0 1400.0,706.4 1401.0,687.1 1402.0,692.9 1403.0,694.6 1404.0,683.1 1405.0,688.7 1406.0,694.1 1407.0,704.1 1408.0,731.6 1409.0,696.6 1410.0,704.8 1411.0,687.8 1412.0,675.2 1413.0,688.1 1414.0,709.8 1415.0,736.1 1416.0,708.1 1417.0,694.7 1418.0,693.0 1419.0,696.5 1420.0,704.4 1421.0,705.1 1422.0,695.7 1423.0,712.0 1424.0,698.1 1425.0,684.9 1426.0,676.0 1427.0,690.6 1428.0,679.6 1429.0,686.4 1430.0,683.6 1431.0,696.5 1432.0,713.7 1433.0,681.8 1434.0,674.5 1435.0,684.5 1436.0,712.2 1437.0,721.6 1438.0,734.5 1439.0,701.3 1440.0,707.9 1441.0,700.3 1442.0,712.2 1443.0,687.8 1444.0,682.8 1445.0,722.3 1446.0,731.4 1447.0,695.1 1448.0,704.1 1449.0,691.4 1450.0,685.1 1451.0,678.9 1452.0,706.2 1453.0,700.1 1454.0,705.3 1455.0,708.4 1456.0,719.5 1457.0,723.1 1458.0,704.6 1459.0,683.0 1460.0,668.1 1461.0,676.9 1462.0,712.8 1463.0,695.7 1464.0,701.1 1465.0,697.1 1466.0,693.9 1467.0,697.8 1468.0,685.4 1469.0,691.8 1470.0,711.5 1471.0,708.4 1472.0,697.5 1473.0,682.1 1474.0,704.0 1475.0,718.1 1476.0,715.9 1477.0,733.9 1478.0,713.3 1479.0,704.6 1480.0,695.4 1481.0,691.1 1482.0,677.2 1483.0,690.9 1484.0,682.8 1485.0,685.0 1486.0,710.1 1487.0,697.8 1488.0,685.8 1489.0,679.7 1490.0,705.0 1491.0,710.5 1492.0,717.3 1493.0,721.3 1494.0,708.7 1495.0,705.3 1496.0,714.7 1497.0,732.6 1498.0,695.0 1499.0,727.8 1500.0,726.0 1501.0,711.3 1502.0,707.7 1503.0,708.4 1504.0,695.3 1505.0,698.3 1506.0,694.9 1507.0,682.9 1508.0,692.6 1509.0,700.7 1510.0,707.1 1511.0,706.4 1512.0,683.8 1513.0,716.7 1514.0,713.8 1515.0,708.6 1516.0,699.1 1517.0,694.8 1518.0,716.0 1519.0,702.6 1520.0,682.4 1521.0,712.9 1522.0,729.1 1523.0,684.1 1524.0,697.6 1525.0,723.5 1526.0,723.9 1527.0,715.5 1528.0,696.7 1529.0,693.5 1530.0,713.2 1531.0,699.0 1532.0,695.3 1533.0,692.2 1534.0,692.7 1535.0,725.7 1536.0,695.1 1537.0,710.6 1538.0,690.7 1539.0,704.1 1540.0,682.3 1541.0,664.1 1542.0,685.9 1543.0,688.8 1544.0,697.0 1545.0,707.3 1546.0,689.1 1547.0,687.8 1548.0,708.3 1549.0,716.3 1550.0,716.2 1551.0,719.3 1552.0,691.1 1553.0,696.0 1554.0,709.0 1555.0,711.4 1556.0,696.0 1557.0,706.3 1558.0,695.8 1559.0,699.7 1560.0,720.8 1561.0,700.7 1562.0,681.2 1563.0,692.8 1564.0,710.8 1565.0,717.8 1566.0,693.5 1567.0,690.3 1568.0,685.8 1569.0,676.3 1570.0,678.5 1571.0,713.8 1572.0,711.3 1573.0,700.8 1574.0,708.7 1575.0,707.2 1576.0,714.1 1577.0,734.1 1578.0,712.1 1579.0,695.4 1580.0,714.1 1581.0,696.3 1582.0,705.7 1583.0,699.2 1584.0,689.0 1585.0,677.3 1586.0,709.8 1587.0,693.5 1588.0,680.9 1589.0,677.7 1590.0,682.0 1591.0,696.3 1592.0,690.8 1593.0,688.6 1594.0,705.9 1595.0,689.2 1596.0,696.9 1597.0,710.6 1598.0,698.4 1599.0,694.8 1600.0,716.7 1601.0,706.3 1602.0,681.1 1603.0,712.1 1604.0,698.8 1605.0,676.4 1606.0,678.5 1607.0,683.3 1608.0,677.2 1609.0,678.7 1610.0,692.3 1611.0,693.8 1612.0,697.3 1613.0,701.8 1614.0,700.8 1615.0,704.1 1616.0,699.6 1617.0,710.8 1618.0,710.0 1619.0,684.5 1620.0,704.3 1621.0,693.5 1622.0,707.5 1623.0,701.3 1624.0,689.6 1625.0,693.6 1626.0,725.0 1627.0,705.6 1628.0,693.3 1629.0,684.0 1630.0,690.9 1631.0,710.9 1632.0,712.1 1633.0,705.3 1634.0,698.7 1635.0,710.6 1636.0,692.2 1637.0,700.0 1638.0,723.0 1639.0,721.9 1640.0,714.3 1641.0,715.5 1642.0,706.3 1643.0,717.7 1644.0,681.5 1645.0,695.6 1646.0,696.1 1647.0,678.1 1648.0,669.0 1649.0,692.4 1650.0,699.9 1651.0,678.8 1652.0,693.7 1653.0,695.2 1654.0,690.3 1655.0,688.9 1656.0,677.8 1657.0,708.5 1658.0,707.5 1659.0,690.3 1660.0,687.8 1661.0,686.6 1662.0,697.2 1663.0,705.0 1664.0,695.1 1665.0,712.7 1666.0,710.1 1667.0,701.4 1668.0,708.3 1669.0,694.2 1670.0,677.0 1671.0,684.4 1672.0,690.5 1673.0,695.6 1674.0,703.2 1675.0,692.8 1676.0,705.2 1677.0,685.5 1678.0,686.8 1679.0,673.1 1680.0,689.7 1681.0,687.3 1682.0,672.5 1683.0,671.7 1684.0,698.8 1685.0,714.2 1686.0,698.1 1687.0,679.7 1688.0,676.3 1689.0,696.2 1690.0,695.1 1691.0,671.1 1692.0,710.2 1693.0,707.8 1694.0,694.7 1695.0,716.0 1696.0,713.4 1697.0,710.0 1698.0,719.4 1699.0,712.8 1700.0,720.0 1701.0,717.3 1702.0,708.3 1703.0,714.2 1704.0,704.0 1705.0,695.7 1706.0,689.4 1707.0,704.6 1708.0,693.4 1709.0,705.5 1710.0,718.6 1711.0,716.7 1712.0,686.1 1713.0,667.0 1714.0,698.3 1715.0,700.7 1716.0,691.6 1717.0,690.7 1718.0,680.0 1719.0,701.5 1720.0,705.1 1721.0,734.1 1722.0,681.4 1723.0,700.5 1724.0,698.6 1725.0,698.0 1726.0,679.7 1727.0,701.3 1728.0,719.9 1729.0,693.3 1730.0,683.0 1731.0,685.2 1732.0,693.2 1733.0,732.9 1734.0,734.3 1735.0,707.1 1736.0,682.7 1737.0,709.7 1738.0,711.7 1739.0,723.3 1740.0,705.7 1741.0,701.8 1742.0,692.5 1743.0,673.5 1744.0,685.9 1745.0,706.2 1746.0,700.5 1747.0,717.3 1748.0,699.2 1749.0,693.8 1750.0,706.6 1751.0,736.2 1752.0,709.3 1753.0,683.0"/>
 <circle cx="1253.6" cy="558" r="4" fill="#f0f000"/>
 <g font-family="Liberation Sans" font-size="13.5" fill="#fff" text-anchor="end">
  <text x="1044" y="437">-10.0</text>
  <text x="1044" y="507">-20.0</text>
  <text x="1044" y="576">-30.0</text>
  <text x="1044" y="646">-40.0</text>
  <text x="1044" y="715">-50.0</text>
  <text x="1044" y="785">-60.0</text>
 </g>
 <g font-family="Liberation Sans" font-size="13.5" fill="#fff" text-anchor="middle">
  <text x="1092.5" y="798">-60</text>
  <text x="1146.5" y="798">-40</text>
  <text x="1199.5" y="798">-20</text>
  <text x="1253.5" y="798">0</text>
  <text x="1306.5" y="798">20</text>
  <text x="1360.5" y="798">40</text>
  <text x="1413.5" y="798">60</text>
  <text x="1467.5" y="798">80</text>
  <text x="1520.5" y="798">100</text>
  <text x="1574.5" y="798">120</text>
  <text x="1627.5" y="798">140</text>
  <text x="1681.5" y="798">160</text>
  <text x="1734.5" y="798">180</text>
  <text x="1456" y="819">Distance Difference (km)</text>
  <text x="0" y="0" font-size="13" transform="translate(992,606) rotate(-90)">Magnitude (dB)</text>
 </g>
</svg>

</body></html>
